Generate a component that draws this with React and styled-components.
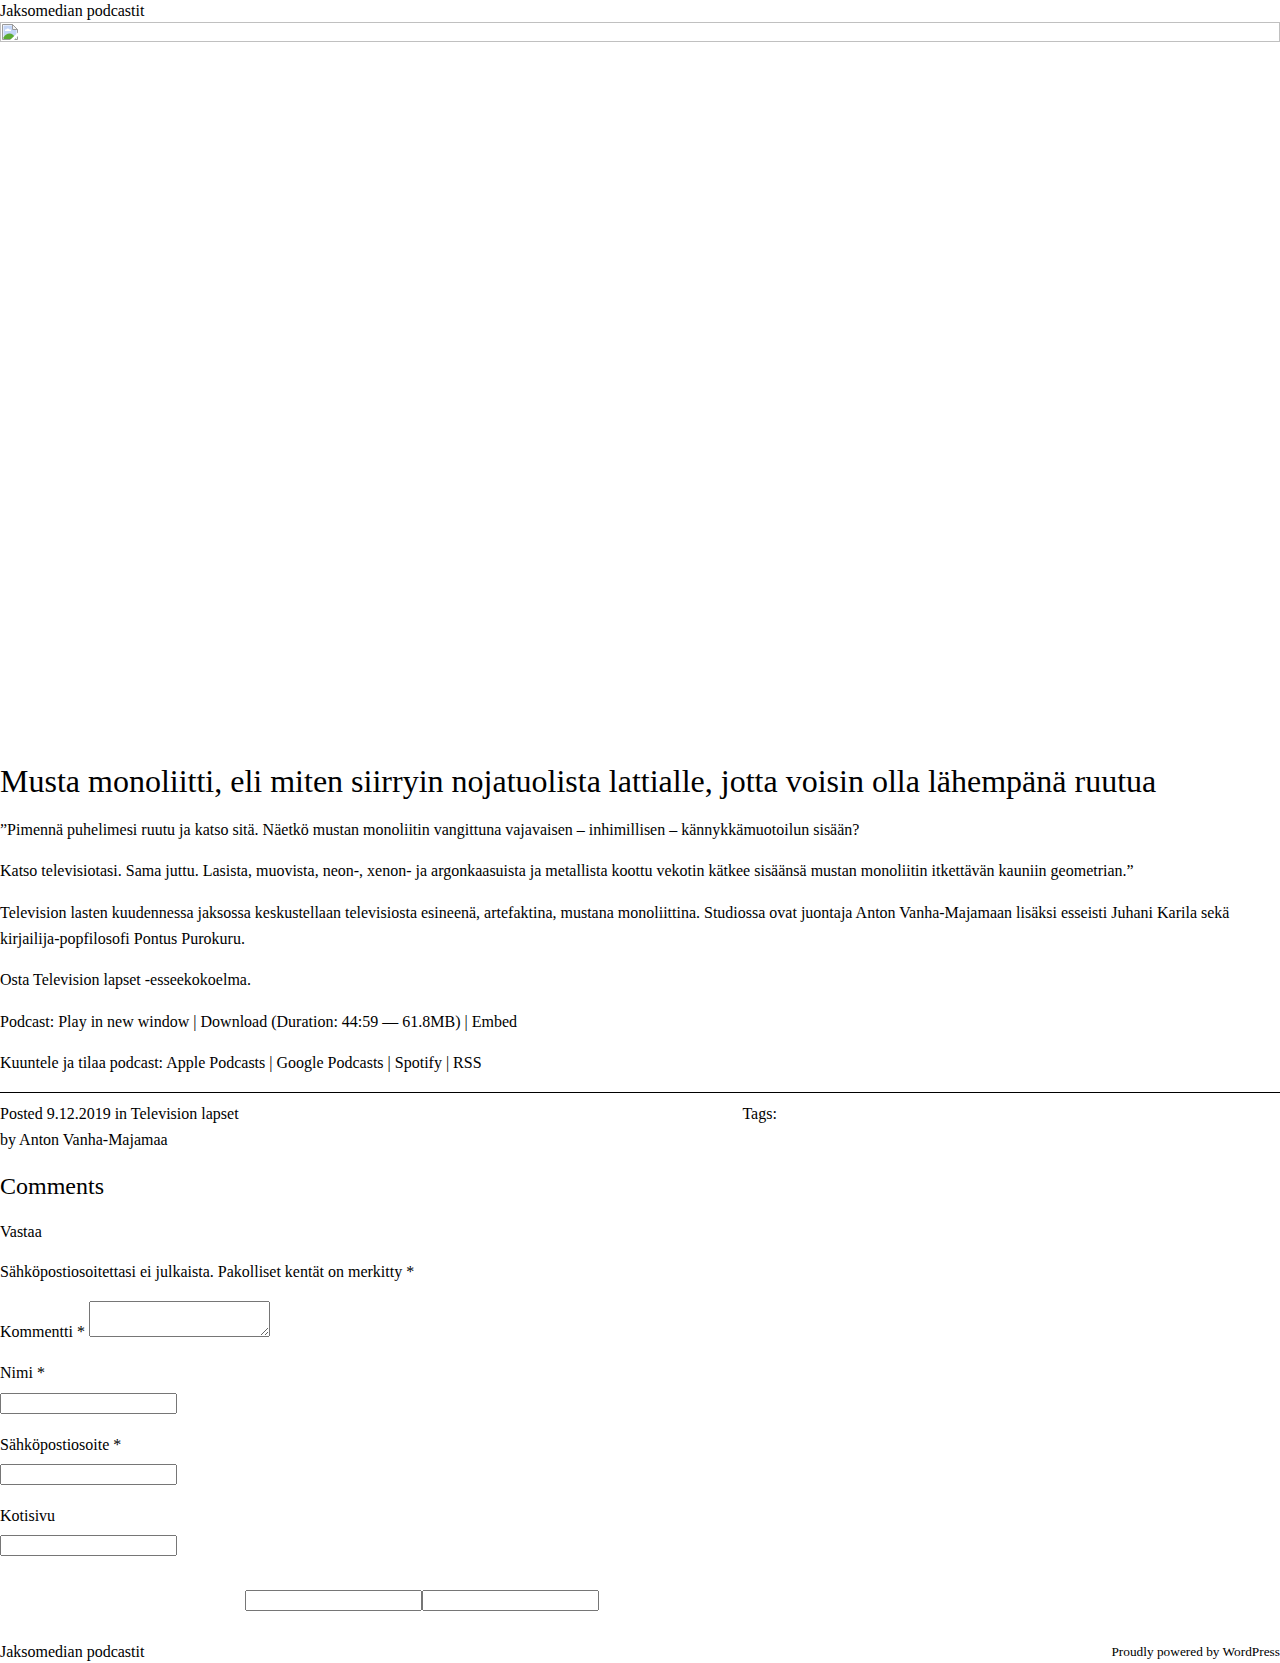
import React from "react";
import styled, { createGlobalStyle } from "styled-components";

const Global = createGlobalStyle`
  *, *::before, *::after { box-sizing: border-box; }
  body { margin: 0; background: #fff; color: #000; font: 16px/25.6px "Liberation Serif", serif; }
`;
const Page = styled.div`display: flex; flex-direction: column; height: 1663px;`;
const SiteName = styled.div`font-size: 16px; line-height: 22px;`;
const Hero = styled.div`
  height: 20px; border: 1px solid #c0c0c0; padding: 1px; display: flex; overflow: hidden;
  margin-bottom: 718px;
`;
const Title = styled.h1`margin: 0; font-size: 32px; font-weight: 400; line-height: 42px;`;
const Body = styled.div`display: flex; flex-direction: column; gap: 16px; padding: 14.8px 0 16.2px;`;
const Para = styled.p`margin: 0;`;
const Meta = styled.div`
  display: grid; grid-template-columns: 58% 1fr; border-top: 1px solid #000; padding-top: 8px;
`;
const Heading = styled.h2`margin: 15.5px 0 15px; font-size: 24px; font-weight: 400; line-height: 36px;`;
const Form = styled.form`display: flex; flex-direction: column; margin: 0;`;
const Note = styled.p`margin: 14.4px 0 16.5px;`;
const Comment = styled.p`margin: 0 0 16.25px; height: 43.3px;`;
const Field = styled.input`display: block; width: 177px; height: 21px; margin: 0;`;
const Area = styled.textarea`width: 181px; height: 36px; margin: 0;`;
const Group = styled.label`display: flex; flex-direction: column; gap: 6.75px; height: 71.2px;`;
const Extra = styled.div`display: flex; padding-left: 245px; margin-top: 15.85px;`;
const Footer = styled.footer`display: flex; justify-content: space-between; margin-top: auto; line-height: 22px;`;
const Small = styled.span`font-size: 13.333px;`;

function BrokenImage() {
  return (
    <svg width="16" height="16" viewBox="0 0 16 16">
      <path d="M.5 15.5V.5h10l5 5v10z" fill="#fff" stroke="#9b9b9b" />
      <path d="M1.500 1.500h9v4h4v9h-13z" fill="#c3d5f7" />
      <path d="M10.5.5v5h5z" fill="#f4f4f4" stroke="#9b9b9b" />
      <path d="M3 7V5.500h1.200a1.800 1.500 0 0 1 3.300 0H9V7z" fill="#fff" />
      <path d="M1.500 15v-1.500C3.500 10.500 5 9.500 7.500 9.500S12 11 14 15z" fill="#5aab33" />
      <path d="M8 16l8-7.500v3.500l-4 4z" fill="#fff" />
    </svg>
  );
}

export default function App() {
  return (
    <Page>
      <Global />
      <SiteName>Jaksomedian podcastit</SiteName>
      <Hero><BrokenImage /></Hero>
      <Title>Musta monoliitti, eli miten siirryin nojatuolista lattialle, jotta voisin olla lähempänä ruutua</Title>
      <Body>
        <Para>”Pimennä puhelimesi ruutu ja katso sitä. Näetkö mustan monoliitin vangittuna vajavaisen – inhimillisen – kännykkämuotoilun sisään?</Para>
        <Para>Katso televisiotasi. Sama juttu. Lasista, muovista, neon-, xenon- ja argonkaasuista ja metallista koottu vekotin kätkee sisäänsä mustan monoliitin itkettävän kauniin geometrian.”</Para>
        <Para>Television lasten kuudennessa jaksossa keskustellaan televisiosta esineenä, artefaktina, mustana monoliittina. Studiossa ovat juontaja Anton Vanha-Majamaan lisäksi esseisti Juhani Karila sekä kirjailija-popfilosofi Pontus Purokuru.</Para>
        <Para>Osta Television lapset -esseekokoelma.</Para>
        <Para>Podcast: Play in new window | Download (Duration: 44:59 — 61.8MB) | Embed</Para>
        <Para>Kuuntele ja tilaa podcast: Apple Podcasts | Google Podcasts | Spotify | RSS</Para>
      </Body>
      <Meta><div>Posted 9.12.2019 in Television lapset<br />by Anton Vanha-Majamaa</div><div>Tags:</div></Meta>
      <Heading>Comments</Heading>
      <Form>
        <Para>Vastaa</Para>
        <Note>Sähköpostiosoitettasi ei julkaista. Pakolliset kentät on merkitty *</Note>
        <Comment>Kommentti * <Area /></Comment>
        <Group>Nimi *<Field /></Group>
        <Group>Sähköpostiosoite *<Field /></Group>
        <Group>Kotisivu<Field /></Group>
        <Extra><Field /><Field /></Extra>
      </Form>
      <Footer><SiteName>Jaksomedian podcastit</SiteName><Small>Proudly powered by WordPress</Small></Footer>
    </Page>
  );
}
